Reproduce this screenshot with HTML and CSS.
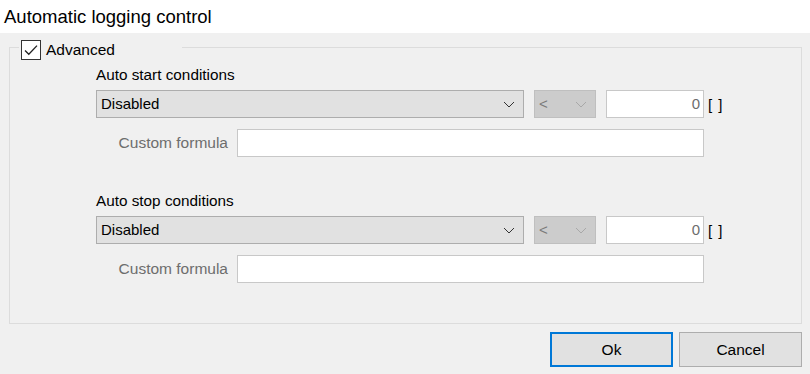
FILE: index.html
```html
<!DOCTYPE html>
<html lang="en">

<head>
    <meta charset="UTF-8" />
    <title>Automatic logging control</title>
    <link rel="stylesheet" href="styles.css">
</head>

<body>
    <div class="title-bar">Automatic logging control</div>

    <fieldset class="group">
        <legend class="group-legend">
            <span class="check">
                <svg viewBox="0 0 18 18" width="18" height="18">
                    <path d="M3 9.5l3.8 3.8L15 4.6" fill="none" stroke="#222" stroke-width="1.3" />
                </svg>
            </span>
            <span>Advanced</span>
        </legend>

        <div class="cond">
            <div class="cond-label">Auto start conditions</div>
            <div class="cond-row">
                <div class="combo">
                    <span>Disabled</span>
                    <svg class="chev" viewBox="0 0 12 7" width="12" height="7">
                        <path d="M1 1l5 5 5-5" fill="none" stroke="#333" stroke-width="1" />
                    </svg>
                </div>
                <div class="combo combo-off">
                    <span>&lt;</span>
                    <svg class="chev" viewBox="0 0 12 7" width="12" height="7">
                        <path d="M1 1l5 5 5-5" fill="none" stroke="#a8a8a8" stroke-width="1" />
                    </svg>
                </div>
                <div class="num">0</div>
                <span class="unit">[ ]</span>
            </div>
            <div class="formula-row">
                <label class="formula-label">Custom formula</label>
                <div class="formula-input"></div>
            </div>
        </div>

        <div class="cond cond-stop">
            <div class="cond-label">Auto stop conditions</div>
            <div class="cond-row">
                <div class="combo">
                    <span>Disabled</span>
                    <svg class="chev" viewBox="0 0 12 7" width="12" height="7">
                        <path d="M1 1l5 5 5-5" fill="none" stroke="#333" stroke-width="1" />
                    </svg>
                </div>
                <div class="combo combo-off">
                    <span>&lt;</span>
                    <svg class="chev" viewBox="0 0 12 7" width="12" height="7">
                        <path d="M1 1l5 5 5-5" fill="none" stroke="#a8a8a8" stroke-width="1" />
                    </svg>
                </div>
                <div class="num">0</div>
                <span class="unit">[ ]</span>
            </div>
            <div class="formula-row">
                <label class="formula-label">Custom formula</label>
                <div class="formula-input"></div>
            </div>
        </div>
    </fieldset>

    <div class="buttons">
        <button class="btn btn-default" type="button">Ok</button>
        <button class="btn" type="button">Cancel</button>
    </div>
</body>

</html>
```

FILE: styles.css
```css
* {
    box-sizing: border-box;
}

body {
    margin: 0;
    background: #f0f0f0;
    color: #000;
    font-family: 'Liberation Sans', Arial, sans-serif;
    font-size: 15px;
    width: 810px;
    height: 374px;
    overflow: hidden;
}

.title-bar {
    background: #ffffff;
    height: 33px;
    padding: 6px 0 0 4px;
    font-size: 18.5px;
    line-height: 22px;
}

.group {
    margin: 1px 8px 0 9px;
    padding: 0 0 0 86px;
    border: 1px solid #dcdcdc;
    height: 290px;
    min-width: 0;
}

.group-legend {
    margin-left: -77px;
    width: 163px;
    padding: 6px 0 0 2px;
    display: flex;
    align-items: center;
    gap: 5px;
    height: 26px;
    line-height: 20px;
    font-size: 15.5px;
}

.check {
    width: 20px;
    height: 20px;
    background: #fff;
    border: 1px solid #333;
    display: flex;
    align-items: center;
    justify-content: center;
}

.cond {
    padding-top: 6px;
}

.cond-stop {
    padding-top: 35px;
}

.cond-label {
    height: 18px;
    line-height: 18px;
    font-size: 15.3px;
    margin-bottom: 6px;
}

.cond-row {
    display: flex;
    align-items: center;
    height: 28px;
}

.combo {
    width: 428px;
    height: 28px;
    background: #e1e1e1;
    border: 1px solid #adadad;
    display: flex;
    align-items: center;
    justify-content: space-between;
    padding: 0 8px 0 4px;
    line-height: 26px;
}

.combo-off {
    width: 62px;
    margin-left: 10px;
    background: #cccccc;
    border-color: #bfbfbf;
    color: #7a7a7a;
    padding: 0 8px 0 4px;
}

.chev {
    display: block;
}

.num {
    width: 98px;
    height: 28px;
    margin-left: 10px;
    background: #fff;
    border: 1px solid #c8c8c8;
    text-align: right;
    padding-right: 3px;
    line-height: 26px;
    color: #6d6d6d;
}

.unit {
    margin-left: 4px;
    letter-spacing: 1px;
}

.formula-row {
    display: flex;
    align-items: center;
    margin-top: 11px;
    height: 28px;
}

.formula-label {
    width: 141px;
    text-align: right;
    padding-right: 9px;
    color: #6d6d6d;
    font-size: 15.5px;
}

.formula-input {
    width: 467px;
    height: 28px;
    background: #fff;
    border: 1px solid #c8c8c8;
}

.buttons {
    display: flex;
    justify-content: flex-end;
    gap: 6px;
    margin: 8px 8px 0 0;
}

.btn {
    width: 123px;
    height: 35px;
    background: #e1e1e1;
    border: 1px solid #adadad;
    font-family: inherit;
    font-size: 15.5px;
    color: #000;
    padding: 0;
}

.btn-default {
    border: 2px solid #0078d7;
}
```
